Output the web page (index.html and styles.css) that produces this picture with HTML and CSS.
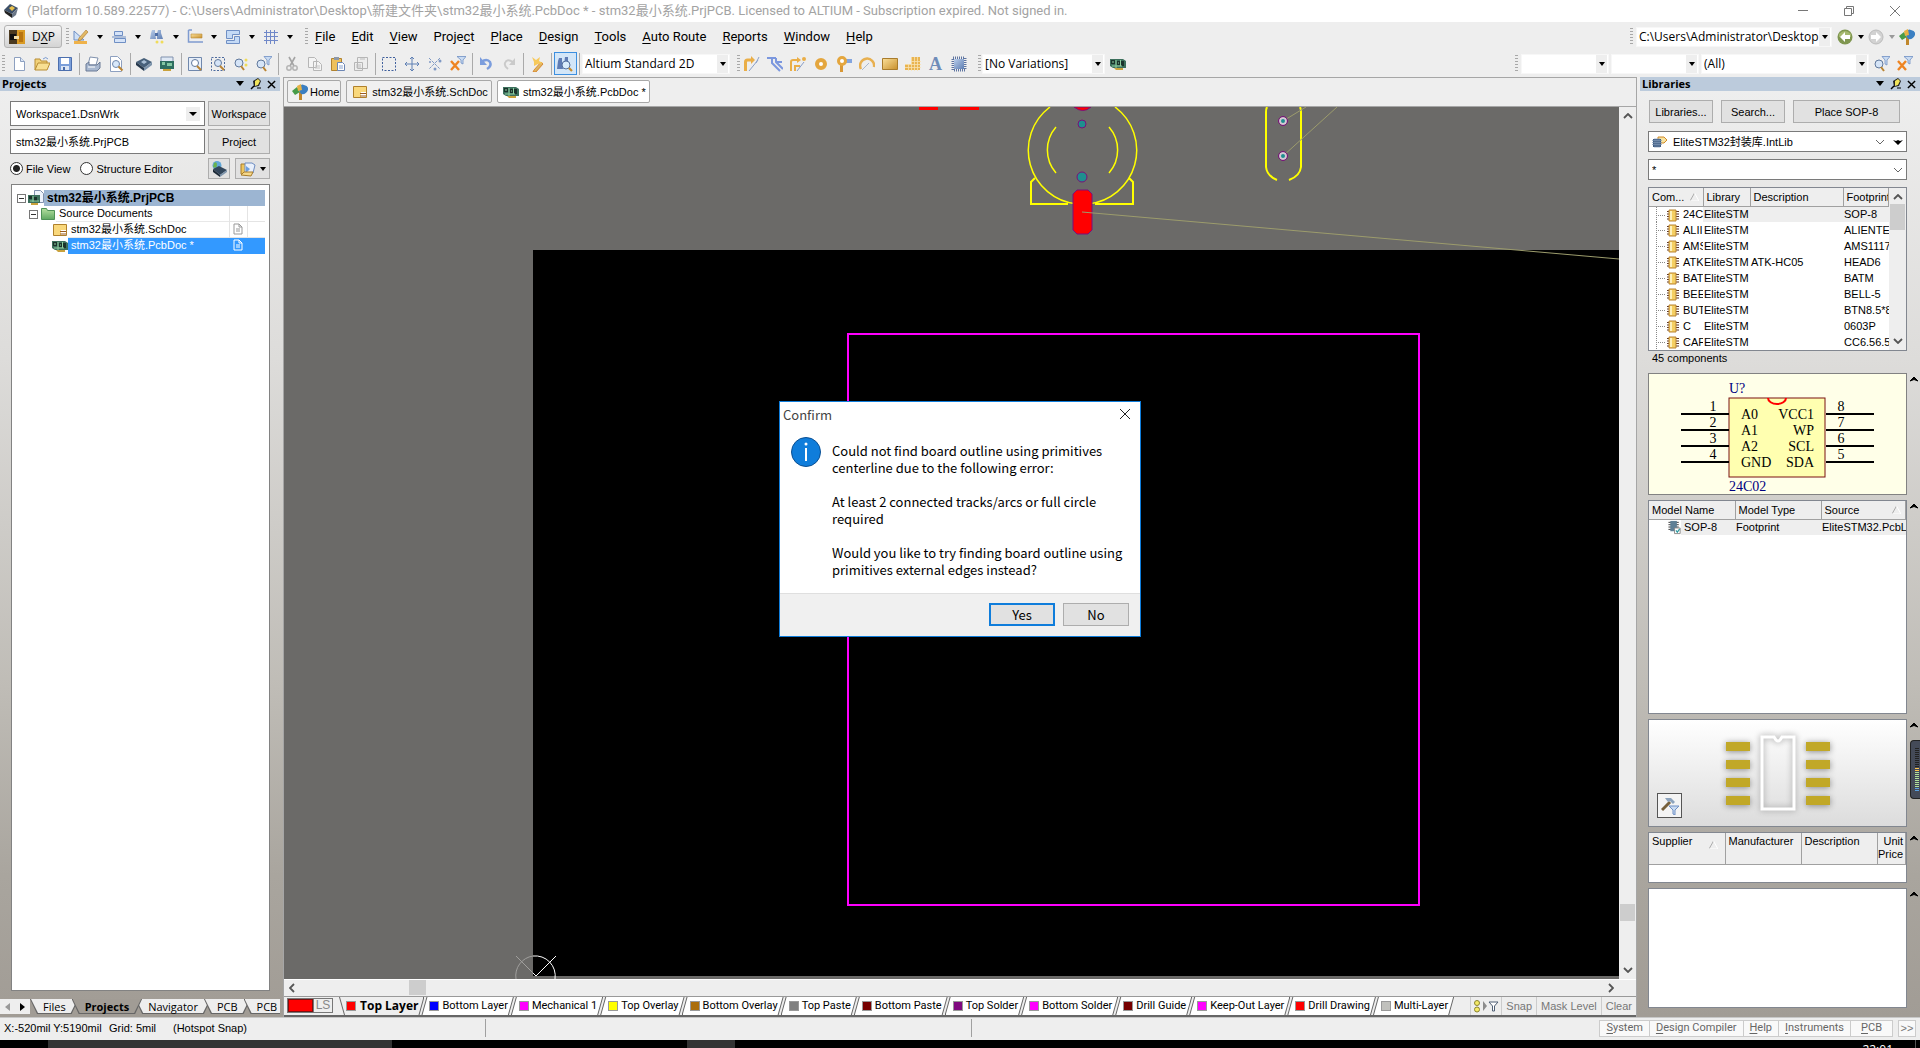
FILE: index.html
```html
<!DOCTYPE html>
<html lang="en">
<head>
<meta charset="utf-8">
<title>stm32最小系统.PrjPCB - Altium Designer</title>
<link rel="stylesheet" href="styles.css">
</head>
<body>
<svg class="sprite" aria-hidden="true">
  <defs>
    <linearGradient id="gold" x1="0" y1="0" x2="1" y2="1"><stop offset="0" stop-color="#fbe09a"/><stop offset="1" stop-color="#c8902c"/></linearGradient>
    <linearGradient id="steel" x1="0" y1="0" x2="1" y2="1"><stop offset="0" stop-color="#b9cdea"/><stop offset="1" stop-color="#5f7fb4"/></linearGradient>
    <linearGradient id="leaf" x1="0" y1="0" x2="0" y2="1"><stop offset="0" stop-color="#b5e0a0"/><stop offset="1" stop-color="#5fa862"/></linearGradient>
  </defs>
  <symbol id="i-app" viewBox="0 0 16 16"><path d="M1 7 7 1l8 4-6 6z" fill="#3d5068"/><path d="m1 7 8 4v4L2 10z" fill="#222"/><path d="m9 11 6-6-2 7-4 3z" fill="#6b7787"/><path d="m6 5 3-2 3 2-3 3z" fill="#e8c04c"/></symbol>
  <symbol id="i-dxp" viewBox="0 0 16 16"><path d="M0 1h9v14H0z" fill="#4b3a20"/><path d="M8 1h8v14H8z" fill="#d99a24"/><path d="M1 5h6v6H1z" fill="#111"/><path d="M5 7h5v3H5z" fill="#f4dfa8"/><path d="M10 3h4v10h-4z" fill="#b87410"/></symbol>
  <symbol id="i-ruler" viewBox="0 0 16 16"><path d="M1 2v9h10z" fill="#cfe0f6" stroke="#6f8fc4"/><path d="m6 9 7-8 2 2-7 8-3 1z" fill="url(#gold)" stroke="#a8762a" stroke-width=".6"/><path d="M1 12h13v3H1z" fill="#efb24a"/></symbol>
  <symbol id="i-align" viewBox="0 0 16 16"><path d="M3.500 2.500h8v4h-8zM3.500 9.500h11v4h-11z" fill="#d5e3f8" stroke="#6f8fc4"/><path d="M1 8h14" stroke="#6f8fc4"/></symbol>
  <symbol id="i-find" viewBox="0 0 16 16"><path d="M3 1h3v3l1 6H1l1-6zM9 1h3v3l2 6H8V4z" fill="url(#steel)"/><path d="M6 4h3v3H6z" fill="#4f6ea6"/><circle cx="8" cy="13" r="1.500" fill="#f0dc5a"/><circle cx="13" cy="13" r="1.500" fill="#f0dc5a"/></symbol>
  <symbol id="i-dim" viewBox="0 0 16 16"><path d="M1.500 1v12H16M5 1 1.500 1" fill="none" stroke="#7f9bd0" stroke-width="1.500"/><path d="M4 5h11v4H4z" fill="url(#gold)" stroke="#b98a35" stroke-width=".6"/></symbol>
  <symbol id="i-room" viewBox="0 0 16 16"><path d="M1.500 1.500h13v4h-7v4h-6zM1.500 11.500h8v-4h5v7h-13z" fill="#c4daf6" stroke="#6f8fc4"/></symbol>
  <symbol id="i-grid" viewBox="0 0 16 16"><path d="M3.500 1v14M7.500 1v14M11.500 1v14M1 3.500h14M1 7.500h14M1 11.500h14" stroke="#7088c8"/></symbol>
  <symbol id="i-new" viewBox="0 0 16 16"><path d="M3.500 1.500h6l4 4v9h-10z" fill="#fff" stroke="#8da0c0"/><path d="M9.500 1.500v4h4" fill="#dbe6f6" stroke="#8da0c0"/></symbol>
  <symbol id="i-open" viewBox="0 0 16 16"><path d="M1 14V3h5l1 2h6v3" fill="#f2d27a" stroke="#b88d34"/><path d="m1 14 3-7h12l-3 7z" fill="#f8df92" stroke="#b88d34"/><path d="M9 3q3-3 5 0" fill="none" stroke="#7a9bd0"/></symbol>
  <symbol id="i-save" viewBox="0 0 16 16"><path d="M1.500 1.500h13v13h-13z" fill="#7b9fda" stroke="#4c6fae"/><path d="M4 2h8v6H4z" fill="#fff"/><path d="M4 10h8v4H4z" fill="#dce6f5"/><path d="M6 11h2v3H6z" fill="#486ba8"/></symbol>
  <symbol id="i-print" viewBox="0 0 16 16"><path d="m5 1 8 1-2 7H3z" fill="#fff" stroke="#8091ad"/><path d="m1 8 3-2v3h8l3-3v6l-3 3H1z" fill="#a8b8d0" stroke="#6b7b96"/><path d="M3 11h7" stroke="#fff"/></symbol>
  <symbol id="i-preview" viewBox="0 0 16 16"><path d="M2.500.500h7l4 4v11h-11z" fill="#fff" stroke="#8da0c0"/><circle cx="8" cy="8" r="3.500" fill="#d8e8fa" stroke="#7088ac"/><path d="m10.500 10.500 4 4" stroke="#b98433" stroke-width="2"/></symbol>
  <symbol id="i-chip" viewBox="0 0 16 16"><path d="m0 6 8-4 8 4-8 6z" fill="#47607a"/><path d="m0 6 8 6v3L0 9z" fill="#26384c"/><path d="m8 12 8-6v3l-8 6z" fill="#7c93ab"/><path d="m5 6 3-2 3 2-3 2z" fill="#a9bfd6"/></symbol>
  <symbol id="i-chipweb" viewBox="0 0 16 16"><circle cx="6" cy="4.500" r="4.500" fill="#62a8d8"/><path d="M3 2q3-2 3 2t-4 2z" fill="#6ab34e"/><path d="m2 8 6-3 8 4-7 5z" fill="#33475c"/><path d="m2 8 7 6v2L2 11z" fill="#1c2a38"/><path d="m9 14 7-5v2l-7 5z" fill="#7c93ab"/></symbol>
  <symbol id="i-board" viewBox="0 0 16 16"><path d="M0 3h13l3 2v7H3L0 10z" fill="#3c6f5c"/><path d="M1 4h4v4H1zM7 5h3v4H7zM11 5h3v5h-3z" fill="#1b332c"/><path d="M2 10h10M6 4v8M10.500 4v6M2 6h2M8 7h1" stroke="#8fd0a0"/><path d="M4 12h9v2H6z" fill="#c9a23c"/></symbol>
  <symbol id="i-boardview" viewBox="0 0 16 16"><path d="M2 1h12v5H2z" fill="#dfe8f4" stroke="#8091ad"/><path d="M1 5h14v8H1z" fill="#2e6e60"/><path d="M3 6h3v3H3zM8 7h5v3H8z" fill="#83c7a2"/><path d="M4 13h8v2H4z" fill="#c9a23c"/></symbol>
  <symbol id="i-zoomdoc" viewBox="0 0 16 16"><path d="M1.500 1.500h13v13h-13z" fill="#e6eef9" stroke="#7088ac"/><circle cx="8" cy="7" r="3.500" fill="#fff" stroke="#60789c"/><path d="m10 10 4 4" stroke="#b98433" stroke-width="2"/></symbol>
  <symbol id="i-zoomsel" viewBox="0 0 16 16"><path d="M1.500 1.500h13v13h-13z" fill="none" stroke="#4c6a9e" stroke-dasharray="2 1.500"/><circle cx="8" cy="7" r="3.500" fill="#d5e4f7" stroke="#60789c"/><path d="m10 10 4 4" stroke="#b98433" stroke-width="2"/></symbol>
  <symbol id="i-zoomobj" viewBox="0 0 16 16"><circle cx="6" cy="7" r="4" fill="#d5e4f7" stroke="#60789c"/><path d="m8 10 3 4" stroke="#b98433" stroke-width="2"/><circle cx="13" cy="4" r="1.500" fill="#f0dc5a"/><circle cx="13" cy="9" r="1.500" fill="#f0dc5a"/></symbol>
  <symbol id="i-zoomflt" viewBox="0 0 16 16"><circle cx="5" cy="8" r="4" fill="#d5e4f7" stroke="#60789c"/><path d="m7 11 3 4" stroke="#b98433" stroke-width="2"/><path d="M8 .500h8L13 4v5l-2-1V4z" fill="#c9dbf2" stroke="#6f8fc4" stroke-width=".8"/></symbol>
  <symbol id="i-cut" viewBox="0 0 16 16"><path d="m5 1 5 9M11 1l-5 9" stroke="#a4a4a4" stroke-width="1.600"/><circle cx="5" cy="12" r="2.200" fill="none" stroke="#b4b4b4" stroke-width="1.500"/><circle cx="11" cy="12" r="2.200" fill="none" stroke="#b4b4b4" stroke-width="1.500"/></symbol>
  <symbol id="i-copy" viewBox="0 0 16 16"><path d="M1.500 1.500h6l2 2v8h-8zM6.500 5.500h5l3 3v6h-8z" fill="#f4f4f4" stroke="#b6b6b6"/><path d="M8 10h5M8 12h5" stroke="#c4c4c4"/></symbol>
  <symbol id="i-paste" viewBox="0 0 16 16"><path d="M1.500 2.500h10v12h-10z" fill="#eec15c" stroke="#b0822f"/><path d="M4 1h5v3H4z" fill="#8d98a8"/><path d="M7.500 6.500h5l2 2v6h-7z" fill="#fff" stroke="#6c86b4"/><path d="M9 10h4M9 12h4" stroke="#8da6d0"/></symbol>
  <symbol id="i-pastes" viewBox="0 0 16 16"><path d="M4.500 1.500h10v11h-10zM1.500 6.500h8v8h-8z" fill="#ededed" stroke="#b6b6b6"/><path d="M3 9h5M3 11h5M7 3h5" stroke="#bdbdbd"/></symbol>
  <symbol id="i-select" viewBox="0 0 16 16"><path d="M1.500 1.500h13v13h-13z" fill="none" stroke="#3f5f9c" stroke-dasharray="2 1.500"/></symbol>
  <symbol id="i-move" viewBox="0 0 16 16"><path d="M8 1v14M1 8h14M6 3l2-2 2 2M6 13l2 2 2-2M3 6 1 8l2 2M13 6l2 2-2 2" fill="none" stroke="#5f80b4"/></symbol>
  <symbol id="i-desel" viewBox="0 0 16 16"><path d="m2 2 11 11M13 2 2 13" stroke="#7f99c4" stroke-dasharray="3 1"/><circle cx="13" cy="5" r="1.500" fill="#7f99c4"/><circle cx="8" cy="13" r="1.500" fill="#7f99c4"/><circle cx="3" cy="6" r="1" fill="#7f99c4"/></symbol>
  <symbol id="i-clear" viewBox="0 0 16 16"><path d="m1 5 8 9M9 5l-8 9" stroke="#ee8422" stroke-width="2.400"/><path d="M7 .500h9L13 4v4l-2-1V4z" fill="#c9dbf2" stroke="#6f8fc4" stroke-width=".8"/></symbol>
  <symbol id="i-undo" viewBox="0 0 16 16"><path d="M3 6q6-4 9 0 2 4-3 7" fill="none" stroke="#7b9ddd" stroke-width="2.500"/><path d="M2 1v8h7z" fill="#7b9ddd"/></symbol>
  <symbol id="i-redo" viewBox="0 0 16 16"><path d="M12 6Q6 2 4 7q-1 3 3 6" fill="none" stroke="#cacaca" stroke-width="2"/><path d="M14 2v7H8z" fill="#cacaca"/></symbol>
  <symbol id="i-pen" viewBox="0 0 16 16"><path d="m5 14 7-8 2 2-7 8H4z" fill="url(#gold)" stroke="#d67a1e" stroke-width=".8"/><path d="m3 1 4 3 4-3-1 4 4 2-5 1-4 2 0-4z" fill="#f7c95a"/></symbol>
  <symbol id="i-browse" viewBox="0 0 16 16"><path d="M2 2h3v3l1 8H0l1-8zM8 1h3v4l1 4H7z" fill="#5f7cb4"/><circle cx="9" cy="9" r="4" fill="#d9ecfc" stroke="#54709e"/><path d="m12 12 3 3" stroke="#c68d2d" stroke-width="2.200"/></symbol>
  <symbol id="i-route" viewBox="0 0 16 16"><path d="M1.500 15V6q0-2 2-2h4" fill="none" stroke="#eaae47" stroke-width="3"/><path d="m7 0 4 4-4 4z" fill="#eaae47"/><path d="m5 15 9-11M15 1l-3 6" stroke="#8a9fc8"/></symbol>
  <symbol id="i-diff" viewBox="0 0 16 16"><path d="M0 2h9M5 2v5l8 8M9 2v4l7 7M9 6h6" fill="none" stroke="#7b97de" stroke-width="2"/></symbol>
  <symbol id="i-multi" viewBox="0 0 16 16"><path d="M1 15V6q0-2 2-2h5M5 15v-5h5" fill="none" stroke="#eaae47" stroke-width="2"/><path d="m7 1 4 3-4 3z" fill="#eaae47"/><path d="m7 15 7-9" stroke="#8a9fc8"/><circle cx="14" cy="3" r="2" fill="#eaae47"/></symbol>
  <symbol id="i-pad" viewBox="0 0 16 16"><circle cx="8" cy="8" r="4" fill="#fff" stroke="#e4a63e" stroke-width="4"/></symbol>
  <symbol id="i-via" viewBox="0 0 16 16"><path d="M8 3h8v4H8z" fill="#83a5df"/><path d="M4 8h3v8H4z" fill="#d99836"/><circle cx="6" cy="5" r="3.500" fill="#fff" stroke="#e4a63e" stroke-width="3"/></symbol>
  <symbol id="i-arc" viewBox="0 0 16 16"><path d="M2 13A7 7 0 1 1 15 11" fill="none" stroke="#e8b050" stroke-width="2.500"/><path d="m3 14 7-7" stroke="#a8b8d0"/></symbol>
  <symbol id="i-fill" viewBox="0 0 16 16"><path d="M.500 2.500h15v11H.500z" fill="url(#gold)" stroke="#a97c2c"/></symbol>
  <symbol id="i-poly" viewBox="0 0 16 16"><path d="M6 1h9v13H0V8h6z" fill="#e9b451"/><path d="M0 11.500h16M0 8.500h16M6 5.500h10M3.500 8v7M6.500 1v14M9.500 1v14M12.500 1v14" stroke="#f7e2b4" stroke-width=".8"/></symbol>
  <symbol id="i-comp" viewBox="0 0 16 16"><path d="M2 2h12v12H2z" fill="none" stroke="#5e74a0" stroke-width="3" stroke-dasharray="1 1"/><path d="M3 3h10v10H3z" fill="url(#steel)"/></symbol>
  <symbol id="i-tree" viewBox="0 0 16 16"><path d="M7 8h3v8H7z" fill="#c0872c"/><path d="m0 7 5-4 3 5-5 3z" fill="#479b48"/><path d="M6 4q3-5 6-3 5 1 4 5-2 5-7 4z" fill="#3b7fc2"/><path d="m5 2 4-2 1 6-4 1z" fill="#e6b143"/></symbol>
  <symbol id="i-back" viewBox="0 0 16 16"><circle cx="8" cy="8" r="7.500" fill="#7f9650"/><path d="M2 5q6-6 12 0v3H2z" fill="#a5b86f"/><path d="M8 3 3 8l5 5v-3h5V6H8z" fill="#fff"/></symbol>
  <symbol id="i-fwd" viewBox="0 0 16 16"><circle cx="8" cy="8" r="7" fill="#d2d2d2" stroke="#bcbcbc"/><path d="m8 3 5 5-5 5v-3H3V6h5z" fill="#fff"/></symbol>
  <symbol id="i-sch" viewBox="0 0 16 16"><path d="M1.500 2.500h13v11h-13z" fill="#f9d87c" stroke="#b0812c"/><path d="M9 8h5v5H9z" fill="#fff"/><path d="M8 9.500h6M8 12h6" stroke="#9a5b20"/></symbol>
  <symbol id="i-prj" viewBox="0 0 16 16"><path d="M6.500.500h6l3 3v9h-9z" fill="#eef3fb" stroke="#8191ad"/><path d="M0 5h12v8H0z" fill="#3c6f5c"/><path d="M1 6h3v3H1zM6 7h3v4H6z" fill="#1b332c"/><path d="M2 11h9M5 6v6" stroke="#8fd0a0"/><path d="M3 13h7v2H3z" fill="#c9a23c"/></symbol>
  <symbol id="i-folder" viewBox="0 0 16 16"><path d="M1.500 13.500v-11h5l1 2h7v9z" fill="url(#leaf)" stroke="#4f9257"/></symbol>
  <symbol id="i-page" viewBox="0 0 10 12"><path d="M1 1h5l3 3v7H1zM6 1v3h3M3 6h4M3 8h4" fill="none" stroke="currentColor"/></symbol>
  <symbol id="i-files" viewBox="0 0 16 16"><path d="M1 13V3h5l1 2v9z" fill="#edc55e" stroke="#a87c2a"/><path d="M5 2h7l3 2-2 8H5z" fill="#e9f0fb" stroke="#6c8cc2"/><path d="m6 5 4 3-4 4z" fill="#6ea0e0"/><path d="m1 14 3-3h9l-2 4z" fill="#f5d88a" stroke="#a87c2a"/></symbol>
  <symbol id="i-part" viewBox="0 0 12 13"><path d="M0 2.500h12M0 5h12M0 7.500h12M0 10h12" stroke="#5b3324"/><path d="M2 1h7v11H2z" fill="#f5cf62" stroke="#b98333"/><path d="M3 2h2v9H3z" fill="#fdf0bb"/></symbol>
  <symbol id="i-model" viewBox="0 0 14 16"><path d="M0 2.500h11M0 5h11M0 7.500h11M0 10h11" stroke="#333"/><path d="M2 1h7v11H2z" fill="#5e8096"/><path d="M6.500 8.500h6v6h-6z" fill="#fff" stroke="#888"/><path d="m8 11 1.500 2L12 9.500" fill="none" stroke="#2f9aa0" stroke-width="1.300"/></symbol>
  <symbol id="i-lib" viewBox="0 0 16 12"><path d="M6 1h6l3 3-3 3H6z" fill="#f8e3a0" stroke="#d08a28"/><path d="M1 3h8v8H1z" fill="#3d5a80"/><path d="M0 4.500h10M0 6.500h10M0 8.500h10M3 2v10M5 2v10M7 2v10" stroke="#7e96b4" stroke-width=".7"/></symbol>
  <symbol id="i-hammer" viewBox="0 0 18 18"><path d="m1 13 8-8" stroke="#77603c" stroke-width="3"/><path d="m4 1 6 0 4 4-2 2-3-3-2 1z" fill="#8ca3bd"/><path d="M8 9h10l-4 4v5l-2-1v-4z" fill="#c9dbf2" stroke="#6f8fc4"/></symbol>
  <symbol id="i-pin" viewBox="0 0 12 12"><path d="M3 3 8 0l3 3-2 5-5 1z" fill="#222"/><path d="M5 3 8 1l2 2-2 4-3 1z" fill="#f2e45a"/><path d="m4 8-3 3" stroke="#000" stroke-width="1.500"/><path d="M7 10h4" stroke="#000"/></symbol>
  <symbol id="i-x" viewBox="0 0 10 10"><path d="m1 1 8 8M9 1 1 9" stroke="currentColor" stroke-width="1.600"/></symbol>
  <symbol id="i-xthin" viewBox="0 0 12 12"><path d="m1 1 10 10M11 1 1 11" stroke="currentColor"/></symbol>
  <symbol id="i-down" viewBox="0 0 10 6"><path d="M1 0h8L5 5z" fill="currentColor"/></symbol>
  <symbol id="i-wave" viewBox="0 0 10 6"><path d="m0 1 3 1 2-1 2 1 3-1-5 5z" fill="currentColor"/></symbol>
  <symbol id="i-caret" viewBox="0 0 6 4"><path d="M0 0h6L3 4z" fill="currentColor"/></symbol>
  <symbol id="i-up2" viewBox="0 0 10 6"><path d="m1 5 4-4 4 4-4-1.500z" fill="#000" stroke="#000"/></symbol>
  <symbol id="i-chev" viewBox="0 0 10 6"><path d="m1 1 4 4 4-4" fill="none" stroke="#555" stroke-width="1.800"/></symbol>
  <symbol id="i-sort" viewBox="0 0 9 8"><path d="M0 8 4.500 0" stroke="#aaa"/><path d="M4.500 0 9 8H0" fill="none" stroke="#fff"/></symbol>
  <symbol id="i-layers" viewBox="0 0 26 14"><circle cx="4" cy="4" r="2.500" fill="#f5ea66" stroke="#8b8430"/><circle cx="4" cy="10.500" r="2.500" fill="#f5ea66" stroke="#8b8430"/><path d="m10 2 4 5-4 5z" fill="#8c8c8c"/><path d="M16 3h9l-3.500 4v5h-2V7z" fill="#fff" stroke="#4f5f74"/></symbol>
</svg>

<div class="app">
  <header class="titlebar">
    <svg class="ic"><use href="#i-app"/></svg>
    <h1>(Platform 10.589.22577) - C:\Users\Administrator\Desktop\新建文件夹\stm32最小系统.PcbDoc * - stm32最小系统.PrjPCB. Licensed to ALTIUM - Subscription expired. Not signed in.</h1>
    <div class="winctl">
      <button aria-label="Minimize"><svg width="12" height="12"><path d="M1 5.500h10" stroke="#777"/></svg></button>
      <button aria-label="Restore"><svg width="12" height="12"><path d="M1.500 3.500h7v7h-7zM3.500 3V1.500h7v7H9" fill="none" stroke="#777"/></svg></button>
      <button aria-label="Close"><svg width="12" height="12"><use href="#i-xthin"/></svg></button>
    </div>
  </header>

  <div class="bar bar-menu">
    <button class="dxp"><svg class="ic"><use href="#i-dxp"/></svg><span>D<u>X</u>P</span></button>
    <i class="grip"></i>
    <div class="drops">
      <button class="drop" aria-label="Utilities"><svg class="ic"><use href="#i-ruler"/></svg><svg class="caret"><use href="#i-caret"/></svg></button>
      <button class="drop" aria-label="Align"><svg class="ic"><use href="#i-align"/></svg><svg class="caret"><use href="#i-caret"/></svg></button>
      <button class="drop" aria-label="Find"><svg class="ic"><use href="#i-find"/></svg><svg class="caret"><use href="#i-caret"/></svg></button>
      <button class="drop" aria-label="Dimension"><svg class="ic"><use href="#i-dim"/></svg><svg class="caret"><use href="#i-caret"/></svg></button>
      <button class="drop" aria-label="Rooms"><svg class="ic"><use href="#i-room"/></svg><svg class="caret"><use href="#i-caret"/></svg></button>
      <button class="drop" aria-label="Grids"><svg class="ic"><use href="#i-grid"/></svg><svg class="caret"><use href="#i-caret"/></svg></button>
    </div>
    <i class="grip"></i>
    <nav class="menu">
      <a href="#"><u>F</u>ile</a><a href="#"><u>E</u>dit</a><a href="#"><u>V</u>iew</a><a href="#">Proje<u>c</u>t</a><a href="#"><u>P</u>lace</a><a href="#"><u>D</u>esign</a><a href="#"><u>T</u>ools</a><a href="#"><u>A</u>uto Route</a><a href="#"><u>R</u>eports</a><a href="#"><u>W</u>indow</a><a href="#"><u>H</u>elp</a>
    </nav>
    <div class="right">
      <i class="grip"></i>
      <select class="combo w-path" aria-label="Path"><option>C:\Users\Administrator\Desktop</option></select>
      <button class="nav" aria-label="Back"><svg class="ic"><use href="#i-back"/></svg><svg class="caret"><use href="#i-caret"/></svg></button>
      <button class="nav off" aria-label="Forward"><svg class="ic"><use href="#i-fwd"/></svg><svg class="caret"><use href="#i-caret"/></svg></button>
      <button class="nav" aria-label="Home"><svg class="ic"><use href="#i-tree"/></svg></button>
    </div>
  </div>

  <div class="bar bar-tools">
    <i class="grip"></i>
    <button class="tb" aria-label="New"><svg class="ic"><use href="#i-new"/></svg></button><button class="tb" aria-label="Open"><svg class="ic"><use href="#i-open"/></svg></button><button class="tb" aria-label="Save"><svg class="ic"><use href="#i-save"/></svg></button>
    <i class="sep"></i>
    <button class="tb" aria-label="Print"><svg class="ic"><use href="#i-print"/></svg></button><button class="tb" aria-label="Preview"><svg class="ic"><use href="#i-preview"/></svg></button>
    <i class="sep"></i>
    <button class="tb" aria-label="Devices"><svg class="ic"><use href="#i-chip"/></svg></button><button class="tb" aria-label="Board view"><svg class="ic"><use href="#i-boardview"/></svg></button>
    <i class="sep"></i>
    <button class="tb" aria-label="Fit document"><svg class="ic"><use href="#i-zoomdoc"/></svg></button><button class="tb" aria-label="Fit area"><svg class="ic"><use href="#i-zoomsel"/></svg></button><button class="tb" aria-label="Fit selected"><svg class="ic"><use href="#i-zoomobj"/></svg></button><button class="tb" aria-label="Fit filtered"><svg class="ic"><use href="#i-zoomflt"/></svg></button>
    <i class="sep"></i>
    <button class="tb" aria-label="Cut"><svg class="ic"><use href="#i-cut"/></svg></button><button class="tb" aria-label="Copy"><svg class="ic"><use href="#i-copy"/></svg></button><button class="tb" aria-label="Paste"><svg class="ic"><use href="#i-paste"/></svg></button><button class="tb" aria-label="Rubber stamp"><svg class="ic"><use href="#i-pastes"/></svg></button>
    <i class="sep"></i>
    <button class="tb" aria-label="Select"><svg class="ic"><use href="#i-select"/></svg></button><button class="tb" aria-label="Move"><svg class="ic"><use href="#i-move"/></svg></button><button class="tb" aria-label="Deselect"><svg class="ic"><use href="#i-desel"/></svg></button><button class="tb" aria-label="Clear filter"><svg class="ic"><use href="#i-clear"/></svg></button>
    <i class="sep"></i>
    <button class="tb" aria-label="Undo"><svg class="ic"><use href="#i-undo"/></svg></button><button class="tb" aria-label="Redo"><svg class="ic"><use href="#i-redo"/></svg></button>
    <i class="sep"></i>
    <button class="tb" aria-label="Cross probe"><svg class="ic"><use href="#i-pen"/></svg></button>
    <i class="sep"></i>
    <button class="tb on" aria-label="Browse"><svg class="ic"><use href="#i-browse"/></svg></button>
    <i class="sep"></i>
    <select class="combo w-view" aria-label="View configuration"><option>Altium Standard 2D</option></select>
    <i class="grip wide"></i>
    <button class="tb" aria-label="Route"><svg class="ic"><use href="#i-route"/></svg></button><button class="tb" aria-label="Route pair"><svg class="ic"><use href="#i-diff"/></svg></button><button class="tb" aria-label="Route multiple"><svg class="ic"><use href="#i-multi"/></svg></button><button class="tb" aria-label="Pad"><svg class="ic"><use href="#i-pad"/></svg></button><button class="tb" aria-label="Via"><svg class="ic"><use href="#i-via"/></svg></button><button class="tb" aria-label="Arc"><svg class="ic"><use href="#i-arc"/></svg></button><button class="tb" aria-label="Fill"><svg class="ic"><use href="#i-fill"/></svg></button><button class="tb" aria-label="Polygon"><svg class="ic"><use href="#i-poly"/></svg></button><button class="tb string" aria-label="String">A</button><button class="tb" aria-label="Component"><svg class="ic"><use href="#i-comp"/></svg></button>
    <i class="grip wide"></i>
    <select class="combo w-var" aria-label="Variation"><option>[No Variations]</option></select>
    <button class="tb" aria-label="Variants"><svg class="ic"><use href="#i-board"/></svg></button>
    <div class="right">
      <i class="grip"></i>
      <select class="combo w-s" aria-label="Filter component"><option></option></select>
      <select class="combo w-s" aria-label="Filter net"><option></option></select>
      <select class="combo w-all" aria-label="Filter set"><option>(All)</option></select>
      <button class="tb" aria-label="Zoom filtered"><svg class="ic"><use href="#i-zoomflt"/></svg></button><button class="tb" aria-label="Clear"><svg class="ic"><use href="#i-clear"/></svg></button>
    </div>
  </div>

  <main class="work">
    <aside class="panel projects">
      <div class="panel-head"><h2>Projects</h2><button aria-label="Options"><svg width="10" height="6"><use href="#i-down"/></svg></button><button aria-label="Pin"><svg width="12" height="12"><use href="#i-pin"/></svg></button><button aria-label="Close panel"><svg width="9" height="9"><use href="#i-x"/></svg></button></div>
      <div class="proj-form">
        <select class="field" aria-label="Workspace file"><option>Workspace1.DsnWrk</option></select>
        <button class="btn">Workspace</button>
        <input class="field" aria-label="Project file" value="stm32最小系统.PrjPCB">
        <button class="btn">Project</button>
      </div>
      <div class="view-row">
        <label><input type="radio" name="view" checked>File View</label>
        <label><input type="radio" name="view">Structure Editor</label>
        <button class="btn sq" aria-label="Refresh"><svg class="ic"><use href="#i-chipweb"/></svg></button>
        <button class="btn sq2" aria-label="Documents"><svg class="ic"><use href="#i-files"/></svg><svg class="caret"><use href="#i-caret"/></svg></button>
      </div>
      <ul class="tree">
        <li class="root"><i class="box"></i><svg class="ic"><use href="#i-prj"/></svg><b>stm32最小系统.PrjPCB</b></li>
        <li class="lv1"><i class="box"></i><svg class="ic"><use href="#i-folder"/></svg><span>Source Documents</span><i class="cell"></i><i class="cell"></i></li>
        <li class="lv2"><svg class="ic"><use href="#i-sch"/></svg><span>stm32最小系统.SchDoc</span><i class="cell"><svg width="10" height="12"><use href="#i-page"/></svg></i><i class="cell"></i></li>
        <li class="lv2 sel"><svg class="ic"><use href="#i-board"/></svg><span>stm32最小系统.PcbDoc *</span><i class="cell"><svg width="10" height="12"><use href="#i-page"/></svg></i><i class="cell"></i></li>
      </ul>
      <div class="ptabs">
        <button class="arr dim" aria-label="Previous"><svg width="5" height="8"><path d="M5 0v8L0 4z" fill="currentColor"/></svg></button>
        <button class="arr" aria-label="Next"><svg width="5" height="8"><path d="M0 0v8l5-4z" fill="currentColor"/></svg></button>
        <button class="ptab">Files</button><button class="ptab cur">Projects</button><button class="ptab">Navigator</button><button class="ptab">PCB</button><button class="ptab">PCB I</button>
      </div>
    </aside>

    <section class="editor">
      <div class="doctabs">
        <button class="doc home"><svg class="ic"><use href="#i-tree"/></svg>Home</button>
        <button class="doc"><svg class="ic"><use href="#i-sch"/></svg>stm32最小系统.SchDoc</button>
        <button class="doc cur"><svg class="ic"><use href="#i-board"/></svg>stm32最小系统.PcbDoc *</button>
      </div>
      <div class="view">
        <svg class="pcb" role="img" aria-label="PCB layout">
          <rect x="249" y="143" width="100%" height="726" fill="#000"/>
          <g fill="#f00"><path d="M635 0h19v3h-19zM676 0h19v3h-19z"/><path d="M790 0h17q-8 7-17 0z" stroke="#7b0f7b"/></g>
          <g fill="none" stroke="#ff0" stroke-width="1.500">
            <path d="M766 0A54 54 0 0 0 793 97M831 0A54 54 0 0 1 804 97"/>
            <path d="M772 20a35 35 0 0 0 0 46M825 20a35 35 0 0 1 0 46"/>
            <path d="m751 71-4 4v22h37M845 71l4 4v22h-38" stroke-width="2"/>
            <path d="M983 0q-1 2-1 5v55q1 9 11 13M1016 0q1 2 1 5v55q-1 9-12 13" stroke-width="2"/>
          </g>
          <path d="M793 83h11l4 4v36l-4 4h-11l-4-4V87z" fill="#f00" stroke="#7b0f7b"/>
          <g fill="#1e8f8f" stroke="#7b0f7b"><circle cx="798" cy="17" r="4"/><circle cx="798" cy="70" r="5"/></g>
          <g stroke="#9c9c6c" fill="none"><path d="m798 105 537 47M999 14l23-14M999 49l54-49"/></g>
          <g fill="#1e8f8f" stroke="#d4c8d4" stroke-width="2"><circle cx="999" cy="14" r="3"/><circle cx="999" cy="49" r="3"/></g>
          <g fill="none" stroke="#7b0f7b"><circle cx="999" cy="14" r="4.500"/><circle cx="999" cy="49" r="4.500"/></g>
          <rect x="564" y="227" width="571" height="571" fill="none" stroke="#f0f" stroke-width="2"/>
          <path d="M232 872a20 20 0 0 1 17-23M232 849l17 17" fill="none" stroke="#a09f9d"/>
          <path d="M249 849a20 20 0 0 1 22 23M249 866l3 3 20-20" fill="none" stroke="#fff"/>
        </svg>
        <div class="vbar"><svg class="up" width="10" height="6"><use href="#i-chev"/></svg><i></i><svg width="10" height="6"><use href="#i-chev"/></svg></div>
      </div>
      <div class="hbar"><svg class="lt" width="10" height="6"><use href="#i-chev"/></svg><i></i><svg class="rt" width="10" height="6"><use href="#i-chev"/></svg></div>
      <div class="layers">
        <button class="ls"><i></i><span>LS</span></button>
        <div class="ltabs">
          <button class="ltab cur"><i class="red"></i>Top Layer</button><button class="ltab"><i class="blue"></i>Bottom Layer</button><button class="ltab"><i class="mag"></i>Mechanical 1</button><button class="ltab"><i class="yel"></i>Top Overlay</button><button class="ltab"><i class="brn"></i>Bottom Overlay</button><button class="ltab"><i class="gry"></i>Top Paste</button><button class="ltab"><i class="mar"></i>Bottom Paste</button><button class="ltab"><i class="pur"></i>Top Solder</button><button class="ltab"><i class="mag"></i>Bottom Solder</button><button class="ltab"><i class="mar"></i>Drill Guide</button><button class="ltab"><i class="mag"></i>Keep-Out Layer</button><button class="ltab"><i class="red"></i>Drill Drawing</button><button class="ltab"><i class="sil"></i>Multi-Layer</button>
        </div>
        <div class="lbtns"><button aria-label="Layer filter"><svg width="26" height="14"><use href="#i-layers"/></svg></button><button>Snap</button><button>Mask Level</button><button>Clear</button></div>
      </div>
    </section>

    <aside class="panel libs">
      <div class="panel-head"><h2>Libraries</h2><button aria-label="Options"><svg width="10" height="6"><use href="#i-down"/></svg></button><button aria-label="Pin"><svg width="12" height="12"><use href="#i-pin"/></svg></button><button aria-label="Close panel"><svg width="9" height="9"><use href="#i-x"/></svg></button></div>
      <div class="libbtns"><button class="btn">Libraries...</button><button class="btn">Search...</button><button class="btn">Place SOP-8</button></div>
      <div class="libpick"><svg width="16" height="12"><use href="#i-lib"/></svg><select aria-label="Library"><option>EliteSTM32封装库.IntLib</option></select><svg width="10" height="6"><use href="#i-wave"/></svg></div>
      <select class="libfilter" aria-label="Filter"><option>*</option></select>
      <div class="complist">
        <table>
          <colgroup><col class="c-name"><col class="c-lib"><col class="c-desc"><col></colgroup>
          <thead><tr><th>Com... <svg width="9" height="8"><use href="#i-sort"/></svg></th><th>Library</th><th>Description</th><th>Footprint</th></tr></thead>
          <tbody>
            <tr class="hl"><td><svg><use href="#i-part"/></svg>24C</td><td>EliteSTM</td><td></td><td>SOP-8</td></tr>
            <tr><td><svg><use href="#i-part"/></svg>ALII</td><td>EliteSTM</td><td></td><td>ALIENTE</td></tr>
            <tr><td><svg><use href="#i-part"/></svg>AMS</td><td>EliteSTM</td><td></td><td>AMS1117</td></tr>
            <tr><td><svg><use href="#i-part"/></svg>ATK</td><td>EliteSTM</td><td>ATK-HC05</td><td>HEAD6</td></tr>
            <tr><td><svg><use href="#i-part"/></svg>BAT</td><td>EliteSTM</td><td></td><td>BATM</td></tr>
            <tr><td><svg><use href="#i-part"/></svg>BEE</td><td>EliteSTM</td><td></td><td>BELL-5</td></tr>
            <tr><td><svg><use href="#i-part"/></svg>BUT</td><td>EliteSTM</td><td></td><td>BTN8.5*8</td></tr>
            <tr><td><svg><use href="#i-part"/></svg>C</td><td>EliteSTM</td><td></td><td>0603P</td></tr>
            <tr><td><svg><use href="#i-part"/></svg>CAP</td><td>EliteSTM</td><td></td><td>CC6.56.5</td></tr>
          </tbody>
        </table>
        <div class="vbar"><svg class="up" width="10" height="6"><use href="#i-chev"/></svg><i></i><svg width="10" height="6"><use href="#i-chev"/></svg></div>
      </div>
      <p class="count">45 components</p>
      <div class="sect">
        <svg class="symbol" role="img" aria-label="24C02 symbol">
          <rect x="80" y="24" width="96" height="79" fill="#ffffb0" stroke="#7b1010"/>
          <path d="M119 24a9 6 0 0 0 18 0" fill="none" stroke="#f00" stroke-width="2"/>
          <path d="M32 40h48M32 56h48M32 72h48M32 88h48M177 40h48M177 56h48M177 72h48M177 88h48" stroke="#000" stroke-width="2"/>
          <g fill="#000080"><text x="80" y="19">U?</text><text x="80" y="117">24C02</text></g>
          <g text-anchor="middle"><text x="64" y="37">1</text><text x="64" y="53">2</text><text x="64" y="69">3</text><text x="64" y="85">4</text><text x="192" y="37">8</text><text x="192" y="53">7</text><text x="192" y="69">6</text><text x="192" y="85">5</text></g>
          <text x="92" y="45">A0</text><text x="92" y="61">A1</text><text x="92" y="77">A2</text><text x="92" y="93">GND</text>
          <g text-anchor="end"><text x="165" y="45">VCC1</text><text x="165" y="61">WP</text><text x="165" y="77">SCL</text><text x="165" y="93">SDA</text></g>
        </svg>
        <button class="fold" aria-label="Collapse"><svg width="10" height="6"><use href="#i-up2"/></svg></button>
      </div>
      <div class="sect grow">
        <div class="models">
          <table>
            <colgroup><col class="m-a"><col class="m-a"><col></colgroup>
            <thead><tr><th>Model Name</th><th>Model Type</th><th>Source <svg width="9" height="8"><use href="#i-sort"/></svg></th></tr></thead>
            <tbody><tr class="hl"><td><svg class="mod"><use href="#i-model"/></svg>SOP-8</td><td>Footprint</td><td>EliteSTM32.PcbL</td></tr></tbody>
          </table>
        </div>
        <button class="fold" aria-label="Collapse"><svg width="10" height="6"><use href="#i-up2"/></svg></button>
      </div>
      <div class="sect">
        <div class="foot">
          <svg role="img" aria-label="SOP-8 footprint">
            <g class="pads"><rect x="77" y="22" width="24" height="9"/><rect x="77" y="40" width="24" height="9"/><rect x="77" y="58" width="24" height="9"/><rect x="77" y="76" width="24" height="9"/><rect x="157" y="22" width="24" height="9"/><rect x="157" y="40" width="24" height="9"/><rect x="157" y="58" width="24" height="9"/><rect x="157" y="76" width="24" height="9"/></g>
            <path class="body" d="M113 17h12l2 3q2 2 4 0l2-3h12v72h-32z"/>
          </svg>
          <button class="tool" aria-label="Tools"><svg width="18" height="18"><use href="#i-hammer"/></svg></button>
        </div>
        <button class="fold" aria-label="Collapse"><svg width="10" height="6"><use href="#i-up2"/></svg></button>
      </div>
      <div class="sect">
        <div class="supplier">
          <table>
            <colgroup><col class="s-a"><col class="s-a"><col class="s-a"><col></colgroup>
            <thead><tr><th>Supplier <svg width="9" height="8"><use href="#i-sort"/></svg></th><th>Manufacturer</th><th>Description</th><th class="r">Unit Price</th></tr></thead>
          </table>
        </div>
        <button class="fold" aria-label="Collapse"><svg width="10" height="6"><use href="#i-up2"/></svg></button>
      </div>
      <div class="sect last">
        <div class="blank"></div>
        <button class="fold" aria-label="Collapse"><svg width="10" height="6"><use href="#i-up2"/></svg></button>
      </div>
    </aside>
  </main>

  <footer class="status">
    <span class="pos">X:-520mil Y:5190mil</span><span class="grid">Grid: 5mil</span><span class="snap">(Hotspot Snap)</span>
    <i class="div"></i><i class="div"></i>
    <div class="sbtns"><button><u>S</u>ystem</button><button><u>D</u>esign Compiler</button><button><u>H</u>elp</button><button><u>I</u>nstruments</button><button><u>P</u>CB</button></div>
    <button class="more">&gt;&gt;</button>
  </footer>
  <div class="taskbar"><i class="t1"></i><i class="t2"></i><time>22:01</time></div>
</div>

<div class="meter"><i></i></div>

<div class="modal">
  <div class="dialog" role="dialog" aria-labelledby="dlg-title">
    <div class="dlg-head"><h2 id="dlg-title">Confirm</h2><button aria-label="Close dialog"><svg width="12" height="12"><use href="#i-xthin"/></svg></button></div>
    <div class="dlg-body">
      <svg width="30" height="30"><circle cx="15" cy="15" r="14.500" fill="#0f7ddb" stroke="#0b4f92"/><path d="M15 11v13" stroke="#fff" stroke-width="2"/><circle cx="15" cy="7" r="1.500" fill="#fff"/></svg>
      <div>
        <p>Could not find board outline using primitives<br>centerline due to the following error:</p>
        <p>At least 2 connected tracks/arcs or full circle<br>required</p>
        <p>Would you like to try finding board outline using<br>primitives external edges instead?</p>
      </div>
    </div>
    <div class="dlg-foot"><button class="yes">Yes</button><button>No</button></div>
  </div>
</div>
</body>
</html>
```
FILE: styles.css
```css
* { box-sizing: border-box; }
body {
  margin: 0;
  font: 11px/14px "Liberation Sans", "Noto Sans CJK SC", sans-serif;
  color: #000;
  background: #000;
}
h1, h2, p, ul { margin: 0; padding: 0; }
button, select, input { font: inherit; color: inherit; margin: 0; padding: 0; border: 0; background: none; border-radius: 0; }
select, input:not([type="radio"]) { appearance: none; min-width: 0; }
button { white-space: nowrap; }
a { color: inherit; text-decoration: none; }
svg { display: block; flex: none; }
u { text-underline-offset: 2px; }
.sprite { position: absolute; width: 0; height: 0; }
.ic { width: 16px; height: 16px; }
.caret { width: 6px; height: 4px; }

.app { min-height: 100vh; display: flex; flex-direction: column; background: #eee; }

/* title bar */
.titlebar { display: flex; align-items: center; height: 22px; padding: 0 19px 0 3px; background: #fff; color: #a3a3a3; }
.titlebar h1 { flex: 1; margin-left: 8px; font: 13px/20px Roboto, "Noto Sans CJK SC", sans-serif; white-space: nowrap; overflow: hidden; }
.winctl { display: flex; gap: 34px; color: #777; }

/* tool bars */
.bar { display: flex; align-items: center; font: 12px/18px "Open Sans", "Noto Sans CJK SC", sans-serif; }
.bar-menu { height: 29px; padding: 0 5px 0 4px; }
.bar-tools { height: 26px; padding: 0 3px 1px 2px; }
.grip { width: 3px; height: 18px; margin-right: 3px; background: repeating-linear-gradient(#a8a8a8 0 1px, transparent 1px 3px); }
.grip.wide { margin: 0 1px 0 7px; }
.right { display: flex; align-items: center; margin-left: auto; }
.dxp { display: flex; align-items: center; gap: 7px; width: 58px; height: 23px; margin-right: 4px; padding-left: 4px; border: 1px solid #b4b4b4; border-radius: 3px; background: linear-gradient(#f4f4f4, #d4d4d4); }
.drops { display: flex; margin: 0 4px 0 1px; }
.drop { display: flex; align-items: center; gap: 8px; width: 38px; }
.menu { display: flex; gap: 16px; margin-left: 4px; font: 13px/18px Roboto, sans-serif; }
.combo { height: 20px; padding-left: 2px; background: #fff url("data:image/svg+xml,%3Csvg xmlns='http://www.w3.org/2000/svg' width='12' height='20'%3E%3Cpath d='M0 0h11v20H0z' fill='%23eee'/%3E%3Cpath d='M3 8h6l-3 4z'/%3E%3C/svg%3E") right center no-repeat; padding-right: 12px; border: 1px solid #f7f7f7; overflow: hidden; }
.w-path { width: 196px; margin-right: 5px; }
.w-view { width: 148px; }
.w-var { width: 123px; margin-right: 2px; }
.w-s { width: 88px; margin-right: 2px; }
.w-all { width: 168px; margin-right: 2px; }
.nav { display: flex; align-items: center; gap: 5px; margin-right: 4px; }
.nav:last-child { margin-right: 0; }
.nav.off .caret { color: #999; }
.tb { width: 23px; height: 23px; padding: 0 3px; display: flex; align-items: center; flex: none; }
.tb.on { border: 1px solid #3c8fe0; background: #d3e6f8; padding: 0 2px; }
.string { font: bold 18px/20px "Liberation Serif", serif; color: #6f8cb8; padding: 0 4px; }
.sep { width: 5px; height: 22px; background: linear-gradient(#aaa, #aaa) 2px 0 / 1px 100% no-repeat; }

/* work area */
.work { flex: 1; display: grid; grid-template-columns: 283px minmax(0, 1fr) 283px; min-height: 900px; }
.panel { display: flex; flex-direction: column; min-width: 0; background: linear-gradient(#efefef, #dddcda 30%, #bfbcb6 65%, #a9a59e 85%, #a19c95); }
.panel-head { display: flex; align-items: center; height: 14px; padding: 0 4px 0 2px; gap: 5px; background: #bccbdc; }
.panel-head h2 { flex: 1; font: bold 11px/14px "Open Sans", sans-serif; }
.btn { border: 1px solid #adadad; background: #e1e1e1; text-align: center; }
.projects { padding-right: 3px; }
.proj-form { display: grid; grid-template-columns: 195px 62px; grid-auto-rows: 25px; gap: 3px; padding: 10px 0 0 10px; }
.field { border: 1px solid #7a7a7a; background: #fff; padding: 0 5px; }
select.field { background: #fff url("data:image/svg+xml,%3Csvg xmlns='http://www.w3.org/2000/svg' width='14' height='14'%3E%3Cpath d='M0 0h14v14H0z' fill='%23eee'/%3E%3Cpath d='M3 5h8l-4 4z'/%3E%3C/svg%3E") right 4px center no-repeat; }
.view-row { display: flex; align-items: center; height: 21px; margin: 4px 10px 5px 10px; }
.view-row label { display: flex; align-items: center; gap: 3px; margin-right: 10px; }
.view-row input { width: 13px; height: 13px; appearance: none; border: 1px solid #333; border-radius: 50%; background: #fff; }
.view-row input:checked { background: radial-gradient(circle, #222 0 3px, #fff 4px); }
.view-row .btn { display: flex; align-items: center; justify-content: center; gap: 4px; height: 21px; }
.sq { width: 22px; margin-left: auto; }
.sq2 { width: 35px; margin-left: 5px; }
.tree { flex: 1; list-style: none; margin: 0 10px 0 11px; padding: 5px 4px; border: 1px solid #828282; background: #fff; }
.tree li { display: flex; align-items: center; height: 16px; }
.tree b, .tree li > span { flex: 1; padding-left: 3px; line-height: 16px; font-size: 12px; }
.tree li > span { font-size: 11px; white-space: nowrap; border-bottom: 1px solid #e8e8e8; line-height: 15px; }
.tree b { background: #9cb5d2; }
.tree .root { padding-left: 1px; }
.tree .lv1 { padding-left: 13px; }
.tree .lv2 { padding-left: 36px; }
.box { width: 9px; height: 9px; margin-right: 2px; border: 1px solid #777; background: linear-gradient(#333, #333) center / 5px 1px no-repeat #fff; }
.cell { width: 18px; height: 16px; padding: 1px 3px; border-left: 1px solid #e4e4e4; border-bottom: 1px solid #e4e4e4; color: #999; }
.tree .sel > span, .sel .cell { background: #3399ff; color: #fff; border-color: #3399ff; height: 16px; }
.ptabs { display: flex; align-items: center; height: 15px; margin: 8px 0 3px; overflow: hidden; font: 11px/13px "Open Sans", sans-serif; }
.arr { flex: none; width: 15px; height: 15px; background: #eee; padding-left: 5px; }
.arr.dim { color: #999; }
.ptab { flex: none; height: 15px; margin-right: -7px; padding: 0 13px; background: #666; clip-path: polygon(0 0, 100% 0, calc(100% - 7px) 100%, 7px 100%); position: relative; z-index: 0; }
.ptab::before { content: ""; position: absolute; inset: 0 1px 1px; z-index: -1; background: #eee; clip-path: polygon(0 0, 100% 0, calc(100% - 7px) 100%, 7px 100%); }
.ptab.cur { font-weight: bold; z-index: 1; }
.ptab.cur::before { background: #a19c95; }

/* editor */
.editor { display: flex; flex-direction: column; min-width: 0; border: 1px solid #a6a6a6; border-width: 1px 1px 0; }
.doctabs { display: flex; gap: 5px; height: 29px; padding: 2px 3px; border-bottom: 1px solid #a6a6a6; }
.doc { display: flex; align-items: center; gap: 4px; height: 23px; padding: 0 3px 0 5px; border: 1px solid #a8a8a8; border-radius: 2px; background: #f0f0f0; }
.doc.home { gap: 2px; padding: 0 1px 0 4px; }
.doc.cur { background: #fff; }
.view { flex: 1; display: flex; min-height: 0; }
.pcb { flex: 1; min-width: 0; height: auto; background: #6b6a68; }
.vbar { width: 17px; display: flex; flex-direction: column; align-items: center; padding: 6px 0; background: #eee; }
.vbar i { width: 15px; height: 17px; margin-top: auto; background: #cdcdcd; }
.view .vbar i { margin-bottom: 46px; }
.up { transform: rotate(180deg); }
.lt { transform: rotate(90deg); }
.rt { transform: rotate(-90deg); margin-left: auto; }
.hbar { display: flex; align-items: center; height: 17px; padding: 0 20px 1px 3px; border-top: 1px solid #fff; }
.hbar i { width: 17px; height: 15px; margin-left: 112px; background: #cdcdcd; }
.layers { display: flex; height: 21px; border-top: 1px solid #999; border-bottom: 2px solid #666; }
.ls { display: flex; width: 46px; height: 15px; margin: 1px 6px 0 3px; border: 1px solid #777; color: #888; font-size: 12px; line-height: 13px; }
.ls i { width: 25px; background: #f00; border: 1px solid #7b1010; }
.ls span { flex: 1; border-left: 1px solid #777; }
.ltabs { display: flex; flex: 1; min-width: 0; background: #eee; font-family: Roboto, sans-serif; }
.ltab { flex: none; display: flex; align-items: center; gap: 3px; padding: 0 6px 0 8px; margin-right: -3px; height: 18px; background: #666; position: relative; z-index: 0; clip-path: polygon(5px 0, 100% 0, calc(100% - 5px) 100%, 0 100%); }
.ltab::before { content: ""; position: absolute; inset: 0 1px; z-index: -1; background: #fff; clip-path: polygon(5px 0, 100% 0, calc(100% - 5px) 100%, 0 100%); }
.ltab.cur { font: bold 12px/14px "Open Sans", sans-serif; gap: 4px; padding: 0 6px 0 7px; clip-path: polygon(0 0, 100% 0, calc(100% - 5px) 100%, 5px 100%); }
.ltab.cur::before { background: #eee; clip-path: polygon(0 0, 100% 0, calc(100% - 5px) 100%, 5px 100%); }
.ltab i { width: 10px; height: 10px; border: 1px solid #999; }
.red { background: #f00; } .blue { background: #00f; } .mag { background: #f0f; } .yel { background: #ff0; }
.brn { background: #ab6e0c; } .gry { background: #808080; } .mar { background: #700; } .pur { background: #800a80; } .sil { background: #c0c0bc; }
.lbtns { display: flex; color: #777; }
.lbtns button { padding: 0 4px; border-left: 1px solid #ccc; }
.lbtns button:first-child { padding: 0 2px; }

/* libraries */
.libs { padding-bottom: 9px; }
.libs .panel-head { margin-left: 3px; }
.libbtns { display: grid; grid-template-columns: 64px 64px 107px; gap: 8px; height: 23px; margin: 9px 0 8px 12px; }
.libpick, .libfilter { height: 21px; margin: 0 13px 7px 11px; border: 1px solid #7a7a7a; background: #fff; }
.libpick { display: flex; align-items: center; gap: 5px; padding: 0 3px; }
.libpick select { flex: 1; height: 19px; }
.libpick select, .libfilter { background: #fff url("data:image/svg+xml,%3Csvg xmlns='http://www.w3.org/2000/svg' width='10' height='6'%3E%3Cpath d='m1 1 4 4 4-4' fill='none' stroke='%23666'/%3E%3C/svg%3E") right 3px center no-repeat; }
.libfilter { padding-left: 3px; }
.complist { display: flex; height: 164px; margin: 0 13px 0 11px; border: 1px solid #828790; background: #fff; }
.complist .vbar i { height: 26px; margin: 4px 0 auto; }
table { flex: 1; width: 100%; table-layout: fixed; border-collapse: collapse; }
th, td { height: 16px; padding: 0 0 0 3px; font-weight: normal; text-align: left; white-space: nowrap; overflow: hidden; }
th { height: 18px; background: #eee; border-right: 1px solid #a0a0a0; border-bottom: 1px solid #a0a0a0; }
th svg { display: inline-block; margin-left: 3px; }
td { padding-left: 1px; }
td svg { display: inline-block; vertical-align: middle; width: 12px; height: 13px; margin-right: 4px; }
td .mod { width: 14px; height: 15px; margin: 0 2px 0 18px; }
.hl td { background: #eee; }
.hl td:first-child { background: linear-gradient(90deg, #fff 32px, #eee 32px); }
.complist tbody td:first-child { padding-left: 18px; background-image: repeating-linear-gradient(90deg, #888 0 1px, transparent 1px 2px), repeating-linear-gradient(#888 0 1px, transparent 1px 2px); background-size: 10px 1px, 1px 16px; background-position: 7px 8px, 7px 0; background-repeat: no-repeat; }
.c-name { width: 54px; } .c-lib { width: 47px; } .c-desc { width: 93px; }
.m-a { width: 86px; } .s-a { width: 76px; }
.count { padding: 0 15px; margin-bottom: 8px; }
.sect { display: grid; grid-template-columns: 1fr 13px; margin: 0 0 5px 11px; }
.grow { flex: 1; }
.last { margin-bottom: 0; }
.fold { height: 12px; padding-left: 2px; }
.symbol { width: 100%; height: 122px; border: 1px solid #828282; background: #ffffe8; font: 14px "Liberation Serif", serif; }
.models, .supplier, .blank { background: #fff; border: 1px solid #828790; }
.models th svg { margin-left: 30px; }
.foot { position: relative; height: 108px; border: 1px solid #828790; background: linear-gradient(#fff, #dcdcdc); }
.foot > svg { width: 100%; height: 106px; }
.pads { fill: #c1a827; filter: drop-shadow(0 1px 3px #888); }
.body { fill: none; stroke: #fff; stroke-width: 3; filter: drop-shadow(0 0 3px #999); }
.tool { position: absolute; left: 8px; bottom: 8px; width: 25px; height: 25px; padding: 3px; border: 1px solid #555; background: #f4f4f4; }
.supplier { height: 51px; }
.supplier th { height: 31px; white-space: normal; vertical-align: top; line-height: 13px; padding-top: 2px; }
.supplier th svg { margin: 6px 0 0 14px; vertical-align: top; }
.supplier .r { text-align: right; padding: 2px 2px 0 0; }
.blank { height: 120px; }

/* status bar */
.status { display: flex; align-items: center; height: 23px; padding: 0 4px 2px; border-top: 1px solid #c8c8c8; }
.pos { width: 105px; } .grid { width: 64px; } .snap { width: 312px; }
.div { width: 1px; height: 18px; margin-right: 485px; background: #a0a0a0; }
.div + .div { margin-right: auto; }
.sbtns { display: flex; height: 17px; margin-right: 5px; border: 1px solid #ccc; background: #f9f9f9; color: #666; font-family: Roboto, sans-serif; }
.sbtns button { padding: 0 6px; border-right: 1px solid #ccc; }
.sbtns button:last-child { border-right: 0; padding: 0 10px; }
.more { width: 18px; height: 17px; border: 1px solid #ccc; background: #f9f9f9; color: #777; }
.taskbar { display: flex; height: 8px; overflow: hidden; background: #000; color: #fff; font: 12px/16px "Open Sans", sans-serif; }
.t1 { width: 344px; margin-left: 48px; background: #333; }
.t2 { width: 48px; margin-left: 295px; background: #333; }
.taskbar time { margin-left: auto; padding: 2px 22px 0 0; border-right: 1px solid #555; margin-right: 4px; }

/* level meter docked to the screen edge */
.meter { position: fixed; right: 0; top: 740px; width: 10px; height: 59px; padding: 7px 1px 6px 4px; border-radius: 4px 0 0 4px; background: #444a58; border: 1px solid #222; border-right: 0; }
.meter i { display: block; height: 100%; background: repeating-linear-gradient(transparent 0 1px, #444a58 1px 2px), linear-gradient(#222 44%, #ffc54c 44% 52%, #b0e09a 52% 92%, #5aa0e0 92%); }

/* dialog */
.modal { position: fixed; inset: 0 0 11px; display: flex; align-items: center; justify-content: center; }
.dialog { width: 362px; border: 1px solid #0f7ddb; background: #fff; font: 13px/17px "Noto Sans CJK SC", sans-serif; }
.dlg-head { display: flex; align-items: center; justify-content: space-between; height: 25px; padding: 0 9px 0 3px; color: #222; }
.dlg-head h2 { font: inherit; color: #444; }
.dlg-body { display: flex; gap: 11px; padding: 10px 0 15px 11px; }
.dlg-body > div { padding-top: 5px; display: grid; gap: 17px; }
.dlg-foot { display: flex; justify-content: flex-end; gap: 8px; padding: 9px 11px 10px; border-top: 1px solid #dfdfdf; background: #f0f0f0; }
.dlg-foot button { width: 66px; height: 23px; border: 1px solid #adadad; background: #e1e1e1; }
.dlg-foot .yes { border: 2px solid #0f7ddb; }
```
